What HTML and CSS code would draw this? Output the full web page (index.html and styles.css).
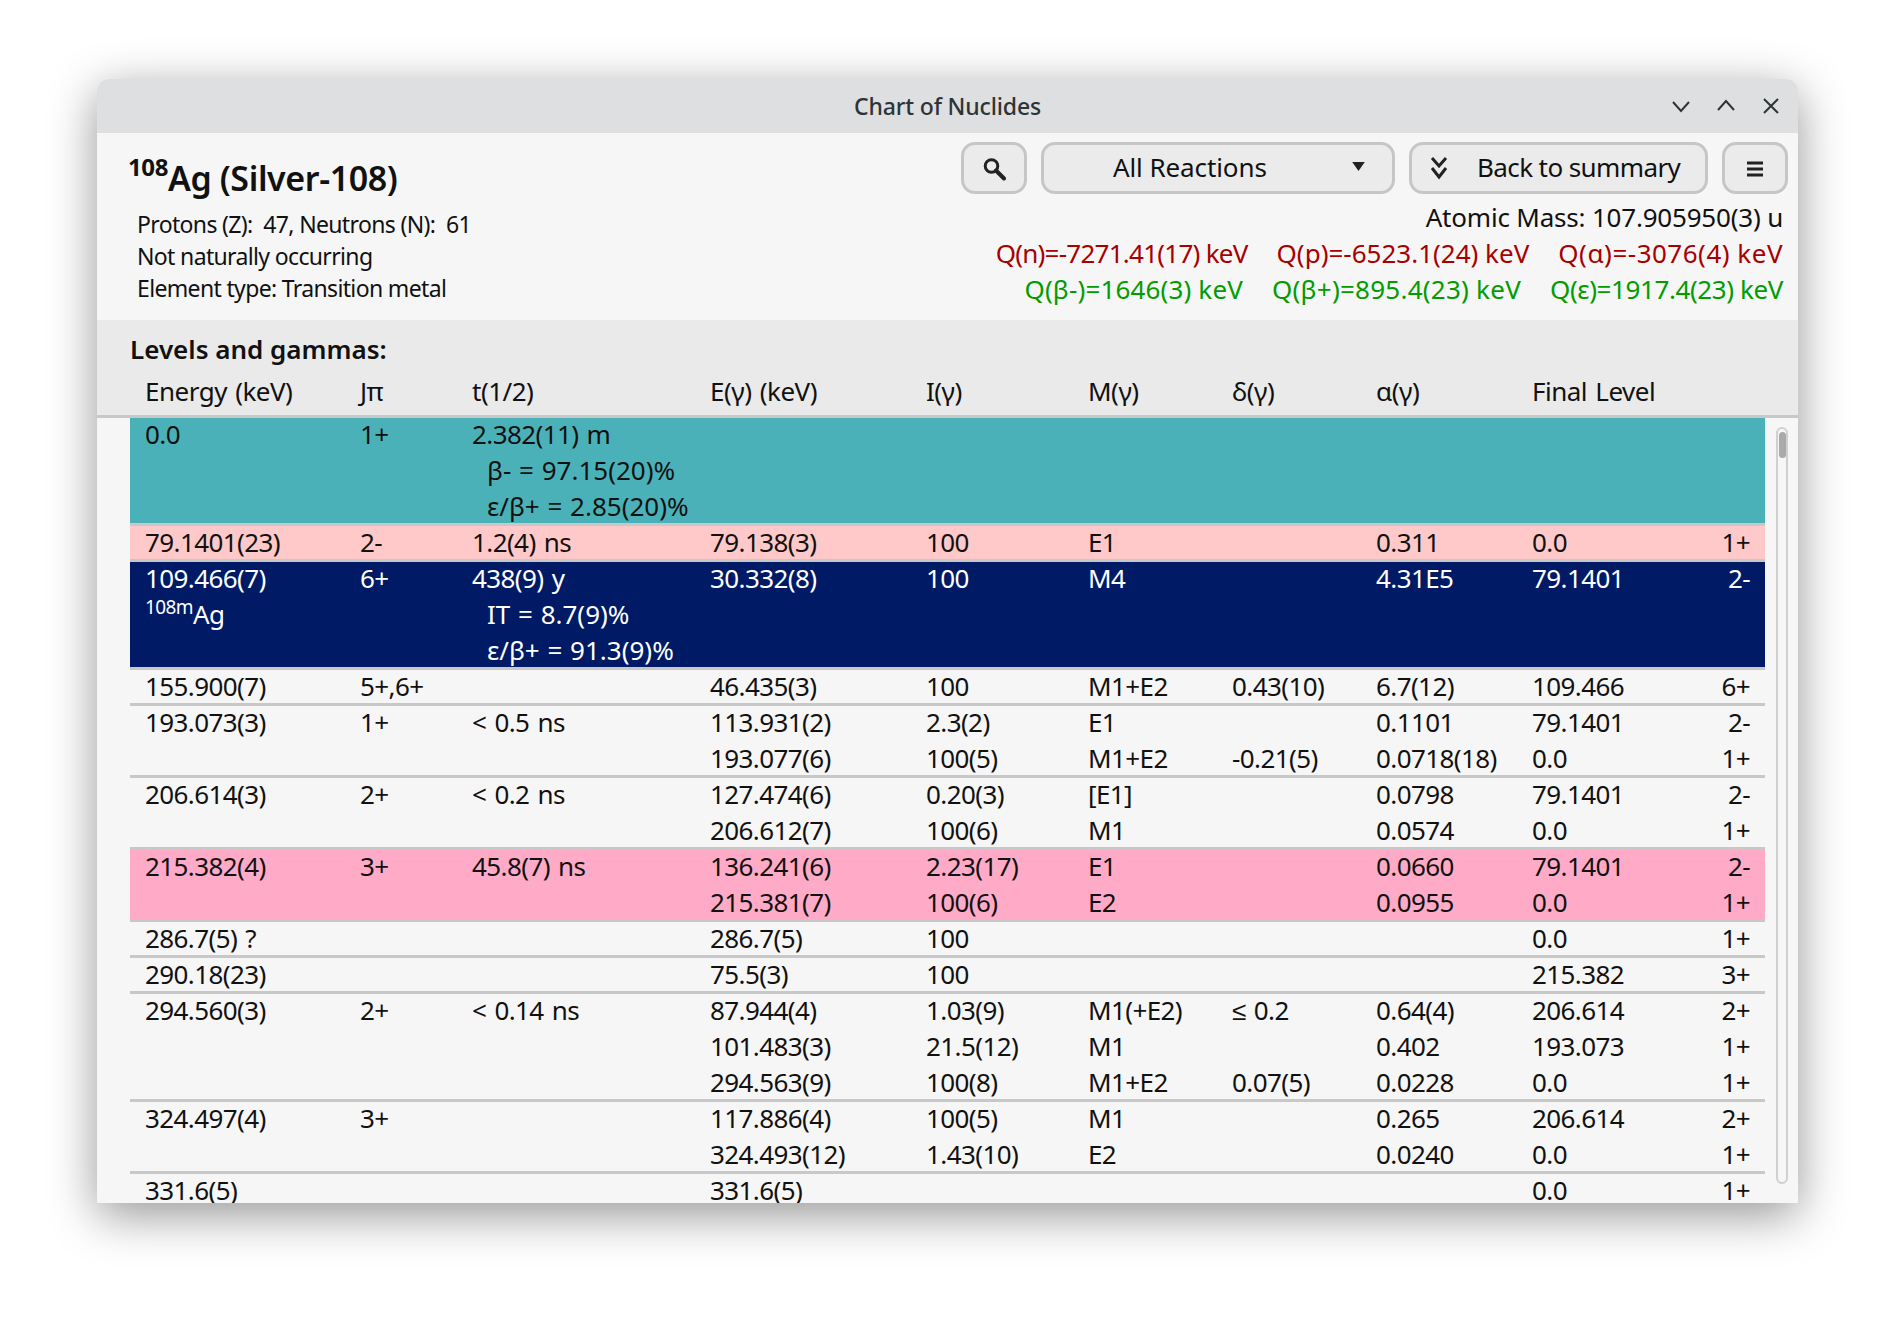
FILE: index.html
```html
<!DOCTYPE html>
<html lang="en">
<head>
    <meta charset="UTF-8">
    <title>Chart of Nuclides</title>
    <link rel="stylesheet" href="styles.css">
</head>
<body>

<div class="window">
    <div class="titlebar">
        <span class="title">Chart of Nuclides</span>
        <div class="win-controls">
            <svg width="22" height="22" viewBox="0 0 22 22"><path d="M3 7l8 9 8-9" /></svg>
            <svg width="22" height="22" viewBox="0 0 22 22"><path d="M3 15l8-9 8 9" /></svg>
            <svg width="22" height="22" viewBox="0 0 22 22"><path d="M4 4l14 14M18 4L4 18" /></svg>
        </div>
    </div>

    <div class="info">
        <div class="info-left">
            <h1><sup>108</sup>Ag (Silver-108)</h1>
            <p>Protons (Z):&nbsp; 47, Neutrons (N):&nbsp; 61</p>
            <p>Not naturally occurring</p>
            <p>Element type: Transition metal</p>
        </div>
        <div class="info-right">
            <div class="toolbar">
                <button class="btn btn-icon">
                    <svg class="icon-search" width="24" height="24" viewBox="0 0 24 24"><circle cx="9.5" cy="9" r="6.3" /><path d="M14 13.5l8 8" /></svg>
                </button>
                <button class="btn btn-select">
                    <span>All Reactions</span>
                    <svg class="caret" width="13" height="9" viewBox="0 0 14 10"><path d="M0 0h14L7 10z" /></svg>
                </button>
                <button class="btn btn-back">
                    <svg width="20" height="24" viewBox="0 0 20 24"><path d="M3 2l7 8 7-8M3 12l7 9 7-9" /></svg>
                    <span>Back to summary</span>
                </button>
                <button class="btn btn-icon">
                    <svg width="16" height="16" viewBox="0 0 16 16"><path d="M0 2h16M0 8h16M0 14h16" /></svg>
                </button>
            </div>
            <div class="mass">Atomic Mass: 107.905950(3) u</div>
            <div class="q-line q-neg">
                <span class="q-n">Q(n)=-7271.41(17) keV</span>
                <span class="q-p">Q(p)=-6523.1(24) keV</span>
                <span class="q-a">Q(α)=-3076(4) keV</span>
            </div>
            <div class="q-line q-pos">
                <span class="q-bm">Q(β-)=1646(3) keV</span>
                <span class="q-bp">Q(β+)=895.4(23) keV</span>
                <span class="q-e">Q(ε)=1917.4(23) keV</span>
            </div>
        </div>
    </div>

    <div class="levels-head">
        <h2>Levels and gammas:</h2>
        <div class="line head-line">
            <span>Energy (keV)</span><span>Jπ</span><span>t(1/2)</span><span>E(γ) (keV)</span><span>I(γ)</span><span>M(γ)</span><span>δ(γ)</span><span>α(γ)</span><span>Final Level</span>
        </div>
    </div>

    <div class="levels-body">
        <div class="levels">
            <div class="level teal">
                <div class="line"><span>0.0</span><span>1+</span><span>2.382(11) m</span></div>
                <div class="line"><span></span><span></span><span class="decay">β- = 97.15(20)%</span></div>
                <div class="line"><span></span><span></span><span class="decay">ε/β+ = 2.85(20)%</span></div>
            </div>
            <div class="level pink">
                <div class="line"><span>79.1401(23)</span><span>2-</span><span>1.2(4) ns</span><span>79.138(3)</span><span>100</span><span>E1</span><span></span><span>0.311</span><span>0.0</span><span class="spin">1+</span></div>
            </div>
            <div class="level navy">
                <div class="line"><span>109.466(7)</span><span>6+</span><span>438(9) y</span><span>30.332(8)</span><span>100</span><span>M4</span><span></span><span>4.31E5</span><span>79.1401</span><span class="spin">2-</span></div>
                <div class="line"><span><sup>108m</sup>Ag</span><span></span><span class="decay">IT = 8.7(9)%</span></div>
                <div class="line"><span></span><span></span><span class="decay">ε/β+ = 91.3(9)%</span></div>
            </div>
            <div class="level">
                <div class="line"><span>155.900(7)</span><span>5+,6+</span><span></span><span>46.435(3)</span><span>100</span><span>M1+E2</span><span>0.43(10)</span><span>6.7(12)</span><span>109.466</span><span class="spin">6+</span></div>
            </div>
            <div class="level">
                <div class="line"><span>193.073(3)</span><span>1+</span><span>&lt; 0.5 ns</span><span>113.931(2)</span><span>2.3(2)</span><span>E1</span><span></span><span>0.1101</span><span>79.1401</span><span class="spin">2-</span></div>
                <div class="line"><span></span><span></span><span></span><span>193.077(6)</span><span>100(5)</span><span>M1+E2</span><span>-0.21(5)</span><span>0.0718(18)</span><span>0.0</span><span class="spin">1+</span></div>
            </div>
            <div class="level">
                <div class="line"><span>206.614(3)</span><span>2+</span><span>&lt; 0.2 ns</span><span>127.474(6)</span><span>0.20(3)</span><span>[E1]</span><span></span><span>0.0798</span><span>79.1401</span><span class="spin">2-</span></div>
                <div class="line"><span></span><span></span><span></span><span>206.612(7)</span><span>100(6)</span><span>M1</span><span></span><span>0.0574</span><span>0.0</span><span class="spin">1+</span></div>
            </div>
            <div class="level hot">
                <div class="line"><span>215.382(4)</span><span>3+</span><span>45.8(7) ns</span><span>136.241(6)</span><span>2.23(17)</span><span>E1</span><span></span><span>0.0660</span><span>79.1401</span><span class="spin">2-</span></div>
                <div class="line"><span></span><span></span><span></span><span>215.381(7)</span><span>100(6)</span><span>E2</span><span></span><span>0.0955</span><span>0.0</span><span class="spin">1+</span></div>
            </div>
            <div class="level">
                <div class="line"><span>286.7(5) ?</span><span></span><span></span><span>286.7(5)</span><span>100</span><span></span><span></span><span></span><span>0.0</span><span class="spin">1+</span></div>
            </div>
            <div class="level">
                <div class="line"><span>290.18(23)</span><span></span><span></span><span>75.5(3)</span><span>100</span><span></span><span></span><span></span><span>215.382</span><span class="spin">3+</span></div>
            </div>
            <div class="level">
                <div class="line"><span>294.560(3)</span><span>2+</span><span>&lt; 0.14 ns</span><span>87.944(4)</span><span>1.03(9)</span><span>M1(+E2)</span><span>≤ 0.2</span><span>0.64(4)</span><span>206.614</span><span class="spin">2+</span></div>
                <div class="line"><span></span><span></span><span></span><span>101.483(3)</span><span>21.5(12)</span><span>M1</span><span></span><span>0.402</span><span>193.073</span><span class="spin">1+</span></div>
                <div class="line"><span></span><span></span><span></span><span>294.563(9)</span><span>100(8)</span><span>M1+E2</span><span>0.07(5)</span><span>0.0228</span><span>0.0</span><span class="spin">1+</span></div>
            </div>
            <div class="level">
                <div class="line"><span>324.497(4)</span><span>3+</span><span></span><span>117.886(4)</span><span>100(5)</span><span>M1</span><span></span><span>0.265</span><span>206.614</span><span class="spin">2+</span></div>
                <div class="line"><span></span><span></span><span></span><span>324.493(12)</span><span>1.43(10)</span><span>E2</span><span></span><span>0.0240</span><span>0.0</span><span class="spin">1+</span></div>
            </div>
            <div class="level">
                <div class="line"><span>331.6(5)</span><span></span><span></span><span>331.6(5)</span><span></span><span></span><span></span><span></span><span>0.0</span><span class="spin">1+</span></div>
            </div>
        </div>
        <div class="scrollbar"><div class="thumb"></div></div>
    </div>
</div>

</body>
</html>
```

FILE: styles.css
```css
/* Page and window */
body {
    margin: 0;
    height: 1319px;
    overflow: hidden;
    background-color: #ffffff;
    font-family: "Noto Sans", sans-serif;
    font-size: 26px;
    letter-spacing: -0.6px;
    color: #111;
}

.window {
    width: 1701px;
    height: 1124px;
    margin: 79px 0 0 97px;
    display: flex;
    flex-direction: column;
    overflow: hidden;
    background-color: #f6f6f6;
    border-radius: 12px 12px 0 0;
    box-shadow: 0 12px 48px rgba(0, 0, 0, 0.42);
}

/* Title bar */
.titlebar {
    position: relative;
    flex: none;
    height: 54px;
    display: flex;
    align-items: center;
    justify-content: center;
    background-color: #dedfe1;
}

.title {
    font-size: 23px;
    font-weight: 500;
    letter-spacing: -0.15px;
    color: #2e3436;
}

.win-controls {
    position: absolute;
    right: 16px;
    top: 16px;
    display: flex;
    gap: 23px;
}

.win-controls path {
    fill: none;
    stroke: #2e3436;
    stroke-width: 2;
}

/* Nuclide info */
.info {
    flex: none;
    height: 187px;
    box-sizing: border-box;
    display: flex;
    justify-content: space-between;
    padding: 9px 10px 0 33px;
}

h1 {
    margin: 13px 0 7px -2px;
    font-size: 34px;
    line-height: 46px;
    font-weight: 600;
    letter-spacing: -0.4px;
}

h1 sup {
    font-size: 24px;
    font-weight: 700;
    line-height: 0;
    vertical-align: 15px;
}

.info-left p {
    margin: 0 0 0 7px;
    font-size: 23px;
    line-height: 32px;
    letter-spacing: -0.65px;
}

.info-right {
    display: flex;
    flex-direction: column;
    align-items: flex-end;
}

.toolbar {
    display: flex;
    gap: 14px;
    margin-bottom: 5px;
}

.btn {
    height: 52px;
    box-sizing: border-box;
    padding-bottom: 3px;
    display: flex;
    align-items: center;
    background-color: #ebebeb;
    border: 3px solid #c6c6c6;
    border-radius: 14px;
    font: inherit;
    letter-spacing: -0.6px;
    color: inherit;
}

.btn svg {
    flex: none;
    margin-top: 3px;
}

.btn-icon {
    width: 66px;
    justify-content: center;
}

.btn-icon circle,
.btn-icon path {
    fill: none;
    stroke: #222;
    stroke-width: 3;
}

.icon-search path {
    stroke-width: 4;
    stroke-linecap: round;
}

.btn-select {
    width: 354px;
    padding: 0 27px 3px 69px;
    justify-content: space-between;
    letter-spacing: -0.1px;
}

.btn-select .caret {
    margin-top: 0;
    fill: #222;
}

.btn-back {
    width: 299px;
    padding: 0 0 3px 17px;
    gap: 28px;
}

.btn-back path {
    fill: none;
    stroke: #222;
    stroke-width: 3;
}

.mass,
.q-line {
    margin-right: 5px;
    line-height: 36px;
}

.mass {
    letter-spacing: -0.2px;
}

.q-line {
    display: flex;
    gap: 29px;
}

.q-neg {
    color: #a60000;
}

.q-pos {
    color: #009c00;
}

.q-n { letter-spacing: -0.75px; }
.q-p { letter-spacing: 0; }
.q-a { letter-spacing: 0.5px; }
.q-bm { letter-spacing: 0.15px; }
.q-bp { letter-spacing: 0.25px; }
.q-e { letter-spacing: -0.4px; }

/* Levels table */
.levels-head {
    flex: none;
    height: 98px;
    box-sizing: border-box;
    padding: 0 33px;
    background-color: #eaeaea;
    border-bottom: 3px solid #c8c8c8;
}

h2 {
    margin: 0;
    padding-top: 11px;
    font-size: 26px;
    line-height: 36px;
    font-weight: 600;
    letter-spacing: 0;
}

.levels-head .head-line {
    height: 48px;
    align-items: center;
    letter-spacing: -0.5px;
}

.levels-body {
    flex: 1;
    min-height: 0;
    display: flex;
    padding-left: 33px;
}

.levels {
    width: 1635px;
    flex: none;
}

.line {
    height: 36px;
    display: grid;
    grid-template-columns: 215px 112px 238px 216px 162px 144px 144px 156px 156px 62px;
    padding-left: 15px;
    line-height: 32px;
    word-spacing: 2px;
    white-space: nowrap;
}

.level {
    border-bottom: 3px solid #c8c8c8;
}

.level .line:last-child {
    height: 33px;
}

.level sup {
    font-size: 19px;
    line-height: 0;
    vertical-align: 10px;
}

.decay {
    padding-left: 15px;
    letter-spacing: 0;
    word-spacing: 1px;
}

.spin {
    text-align: right;
}

.teal {
    background-color: #4bb1b9;
}

.pink {
    background-color: #ffc9c9;
}

.navy {
    background-color: #001a66;
    color: #ffffff;
}

.hot {
    background-color: #ffabc7;
}

.scrollbar {
    box-sizing: border-box;
    width: 12px;
    height: 757px;
    margin: 9px 0 0 11px;
    padding: 3px 0 0 2px;
    border: 2px solid #d0d0d0;
    border-radius: 6px;
}

.thumb {
    width: 7px;
    height: 26px;
    margin-left: -1px;
    background-color: #aaaaaa;
    border-radius: 4px;
}
```
